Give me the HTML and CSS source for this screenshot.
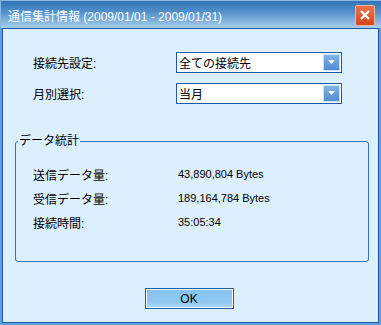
FILE: index.html
```html
<!DOCTYPE html>
<html lang="ja">
<head>
<meta charset="UTF-8">
<title>通信集計情報</title>
<link rel="stylesheet" href="styles.css">
</head>
<body>
    <div class="window">
        <div class="titlebar">
            <span class="title">通信集計情報 (2009/01/01 - 2009/01/31)</span>
            <button type="button" class="close">
                <svg width="12" height="12" viewBox="0 0 12 12"><path d="M2 2 L10 10 M10 2 L2 10" stroke="#fff" stroke-width="2.4" fill="none"/></svg>
            </button>
        </div>
        <div class="client">
            <div class="settings">
                <label>接続先設定:</label>
                <div class="combo">
                    <span class="combo-text">全ての接続先</span>
                    <span class="combo-btn"><svg width="7" height="4" viewBox="0 0 7 4"><path d="M0 0 H7 L3.5 4 Z" fill="#fff"/></svg></span>
                </div>
                <label>月別選択:</label>
                <div class="combo">
                    <span class="combo-text">当月</span>
                    <span class="combo-btn"><svg width="7" height="4" viewBox="0 0 7 4"><path d="M0 0 H7 L3.5 4 Z" fill="#fff"/></svg></span>
                </div>
            </div>

            <fieldset class="stats">
                <legend>データ統計</legend>
                <div class="stat">
                    <span>送信データ量:</span>
                    <span class="stat-value">43,890,804 Bytes</span>
                </div>
                <div class="stat">
                    <span>受信データ量:</span>
                    <span class="stat-value">189,164,784 Bytes</span>
                </div>
                <div class="stat">
                    <span>接続時間:</span>
                    <span class="stat-value">35:05:34</span>
                </div>
            </fieldset>

            <div class="footer">
                <button type="button" class="ok">OK</button>
            </div>
        </div>
    </div>
</body>
</html>
```

FILE: styles.css
```css
body {
    margin: 0;
    font-family: "Liberation Sans", "Noto Sans CJK JP", sans-serif;
    font-size: 12px;
    color: #000;
}
.window {
    width: 381px;
    height: 325px;
    box-sizing: border-box;
    display: flex;
    flex-direction: column;
    background: #5c9edf;
    padding: 0 2px 2px;
}
.titlebar {
    height: 28px;
    margin: 0 -2px;
    padding: 0 6px 0 8px;
    display: flex;
    align-items: center;
    justify-content: space-between;
    background: linear-gradient(#2f71b3, #5592cb 45%, #a7cfee);
    box-shadow: inset 1px 1px 0 #86b9e8;
}
.title {
    color: #fff;
    margin-top: 2px;
}
.close {
    width: 20px;
    height: 21px;
    padding: 0;
    margin-top: 2px;
    border: 1px solid #f4b898;
    border-radius: 2px;
    background: linear-gradient(#ea7446, #d2461b);
    display: flex;
    align-items: center;
    justify-content: center;
}
.client {
    flex: 1;
    border: 1px solid #1a5aa6;
    background: #dbeffd;
    padding-top: 23px;
}
.settings {
    display: grid;
    grid-template-columns: 143px 166px;
    row-gap: 10px;
    align-items: center;
    padding-left: 30px;
}
.combo {
    height: 21px;
    box-sizing: border-box;
    border: 1px solid #1b5aa6;
    background: #fff;
    display: flex;
    align-items: center;
    justify-content: space-between;
    padding: 0 1px 0 2px;
}
.combo-btn {
    width: 17px;
    height: 17px;
    box-sizing: border-box;
    border: 1px solid #c9e1f6;
    background: linear-gradient(#80b5e7, #4d8dd2);
    display: flex;
    align-items: center;
    justify-content: center;
    padding-bottom: 2px;
}
.stats {
    margin: 30px 9px 0 12px;
    padding: 14px 0 27px 2px;
    min-width: 0;
    border: 1px solid #2b78c2;
    border-radius: 3px;
}
.stats legend {
    padding: 0 1px;
    line-height: 14px;
}
.stat {
    display: grid;
    grid-template-columns: 145px auto;
    align-items: center;
    height: 24px;
    padding-left: 15px;
}
.stat-value {
    font-size: 11px;
}
.footer {
    display: flex;
    justify-content: center;
    margin-top: 26px;
    padding-right: 3px;
}
.ok {
    width: 89px;
    height: 21px;
    padding: 0;
    border: 1px solid #1f5d9e;
    box-shadow: inset 0 0 0 1px #fff;
    background: linear-gradient(#86c2ef, #8fc8f1 70%, #b2daf7);
    font-family: "Liberation Sans", sans-serif;
    font-size: 12px;
    color: #000;
}
```
